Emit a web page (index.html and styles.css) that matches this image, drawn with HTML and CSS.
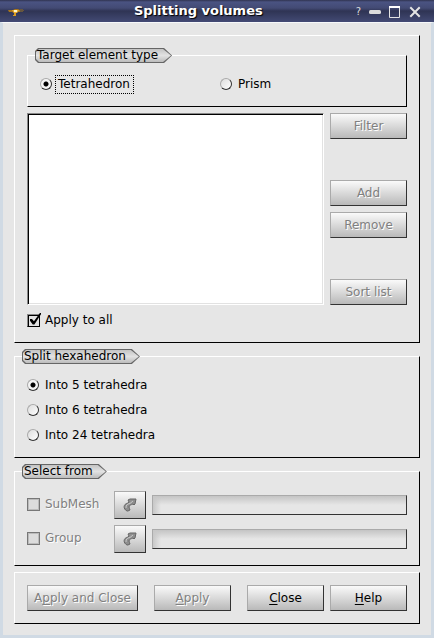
FILE: index.html
```html
<!DOCTYPE html>
<html lang="en">
<head>
<meta charset="utf-8">
<title>Splitting volumes</title>
<link rel="stylesheet" href="styles.css">
</head>
<body>
<header class="titlebar">
  <svg class="app-icon" width="18" height="14" viewBox="0 -1 18 14" aria-hidden="true">
    <path d="M1 5h5l2-1h3l2 1h4l-2 2h-4l-2 1H7L5 7H2z" fill="#a87418"/>
    <path d="M5 5h7l-2 3H7z" fill="#e9ae35"/>
    <path d="M7 5h3v2H7z" fill="#fff6c8"/>
    <path d="M7 8h2v3H6v-1h1z" fill="#d99a20"/>
    <path d="M13 4h3v3h-3z" fill="#66563f"/>
  </svg>
  <h1>Splitting volumes</h1>
  <div class="window-controls">
    <button type="button" class="ctl ctl-help" aria-label="What's this">?</button>
    <button type="button" class="ctl" aria-label="Minimize"><svg width="12" height="12" viewBox="0 0 12 12"><rect y="4" width="12" height="4" rx="1.5" fill="#dcdcdc"/></svg></button>
    <button type="button" class="ctl" aria-label="Maximize"><svg width="12" height="12" viewBox="0 0 12 12"><path d="M.5 1v10.500h10V1" fill="none" stroke="#e4e4e4"/><path d="M0 1h11" stroke="#fff" stroke-width="2"/></svg></button>
    <button type="button" class="ctl" aria-label="Close window"><svg width="12" height="12" viewBox="0 0 12 12"><path d="M2 2l8 8m0-8l-8 8" stroke="#e4e4e4" stroke-width="2" stroke-linecap="square"/></svg></button>
  </div>
</header>
<main class="dialog">
  <section class="group arguments">
    <fieldset class="group">
      <legend>Target element type</legend>
      <div class="two-columns">
        <label class="option"><input type="radio" name="type" checked><span class="focused">Tetrahedron</span></label>
        <label class="option"><input type="radio" name="type"><span>Prism</span></label>
      </div>
    </fieldset>
    <div class="elements">
      <select class="element-list" size="10" aria-label="Elements"></select>
      <div class="list-actions">
        <button type="button" class="btn" disabled>Filter</button>
        <div class="stack">
          <button type="button" class="btn" disabled>Add</button>
          <button type="button" class="btn" disabled>Remove</button>
        </div>
        <button type="button" class="btn" disabled>Sort list</button>
      </div>
    </div>
    <label class="option check"><input type="checkbox" checked><span>Apply to all</span></label>
  </section>

  <fieldset class="group">
    <legend>Split hexahedron</legend>
    <div class="stack">
      <label class="option"><input type="radio" name="split" checked><span>Into 5 tetrahedra</span></label>
      <label class="option"><input type="radio" name="split"><span>Into 6 tetrahedra</span></label>
      <label class="option"><input type="radio" name="split"><span>Into 24 tetrahedra</span></label>
    </div>
  </fieldset>

  <fieldset class="group">
    <legend>Select from</legend>
    <div class="sources">
      <label class="option check disabled"><input type="checkbox" disabled><span>SubMesh</span></label>
      <button type="button" class="btn pick" disabled aria-label="Select submesh">
        <svg width="16" height="16" viewBox="0 0 16 16"><path d="M5 14C1 12 1 7 6 6l1-1-1-2 2-1h6l-1 5-1 1-1-1c-2 1-4 1-4 3 0 1 1 2 1 3l-2 1z" fill="#8e8e8e" stroke="#666"/><path d="M4 11c0-3 1-4 4-4.500l3-2.500" fill="none" stroke="#c8c8c8"/></svg>
      </button>
      <input class="field" type="text" disabled aria-label="SubMesh name">
      <label class="option check disabled"><input type="checkbox" disabled><span>Group</span></label>
      <button type="button" class="btn pick" disabled aria-label="Select group">
        <svg width="16" height="16" viewBox="0 0 16 16"><path d="M5 14C1 12 1 7 6 6l1-1-1-2 2-1h6l-1 5-1 1-1-1c-2 1-4 1-4 3 0 1 1 2 1 3l-2 1z" fill="#8e8e8e" stroke="#666"/><path d="M4 11c0-3 1-4 4-4.500l3-2.500" fill="none" stroke="#c8c8c8"/></svg>
      </button>
      <input class="field" type="text" disabled aria-label="Group name">
    </div>
  </fieldset>

  <footer class="group actions">
    <button type="button" class="btn wide" disabled>A<u>p</u>ply and Close</button>
    <button type="button" class="btn" disabled><u>A</u>pply</button>
    <div class="pair">
      <button type="button" class="btn"><u>C</u>lose</button>
      <button type="button" class="btn"><u>H</u>elp</button>
    </div>
  </footer>
</main>
</body>
</html>
```
FILE: styles.css
```css
* { box-sizing: border-box; }

body {
  margin: 0;
  min-height: 100vh;
  display: flex;
  flex-direction: column;
  background: #e6e6e6;
  color: #000;
  font: 12px/15px "DejaVu Sans", sans-serif;
}

button, input, select { font: inherit; margin: 0; }

.titlebar {
  display: grid;
  grid-template-columns: auto 1fr auto;
  align-items: center;
  height: 22px;
  padding: 0 13px 0 7px;
  background: linear-gradient(#303450, #4a5382 2px, #434a74 8px, #2f3454 11px, #363c60 15px, #434a74);
}
.titlebar h1 {
  margin: 0;
  padding: 0 0 2px 16px;
  color: #fff;
  font-size: 13px;
  font-weight: bold;
  text-align: center;
  text-shadow: 1px 1px 1px #000;
}
.window-controls { display: flex; justify-content: flex-end; align-items: center; gap: 8px; padding-top: 2px; }
.ctl { display: flex; padding: 0; border: 0; background: none; color: #ddd; }
.ctl-help { font-size: 10px; line-height: 12px; }

.dialog {
  flex: 1;
  display: flex;
  flex-direction: column;
  gap: 6px;
  padding: 12px 11px 11px;
  border: solid #d0dae4;
  border-width: 1px 3px 3px;
  border-color: #f6f8fa #d0dae4 #d0dae4;
}

.group {
  min-width: 0;
  margin: 0;
  padding: 12px;
  border: 1px solid;
  border-color: #fff #000 #000 #fff;
}
.arguments { display: flex; flex-direction: column; gap: 6px; }

legend {
  position: relative;
  z-index: 0;
  height: 15px;
  margin-left: -5px;
  padding: 0 14px 0 2px;
}
legend::before, legend::after {
  content: "";
  position: absolute;
  z-index: -1;
  inset: 0;
  background: #666;
  clip-path: polygon(0 3px, 3px 0, calc(100% - 8px) 0, 100% 50%, calc(100% - 8px) 100%, 3px 100%, 0 calc(100% - 3px));
}
legend::after { inset: 1px; background: linear-gradient(#c4c4c4, #e2e2e2 50%, #bcbcbc); }

.two-columns { display: grid; grid-template-columns: 1fr 1fr; gap: 6px; }
.stack { display: flex; flex-direction: column; gap: 6px; }

.option { display: flex; align-items: center; gap: 3px; height: 19px; }
.option span { padding: 2px 3px; }
.option .focused { padding-right: 4px; outline: 1px dotted #000; outline-offset: -1px; }
.check { gap: 2px; }

input[type="radio"], input[type="checkbox"] { appearance: none; flex: none; }
input[type="radio"] {
  width: 12px;
  height: 12px;
  margin-bottom: 1px;
  border: 1px solid;
  border-color: #aaa #333 #333 #aaa;
  border-radius: 50%;
  background: linear-gradient(135deg, #ddd, #fff);
}
input[type="radio"]:checked { background: radial-gradient(circle, #000 2px, #f4f4f4 3px); }
input[type="checkbox"] {
  position: relative;
  width: 13px;
  height: 13px;
  border: 1px solid;
  border-color: #888 #000 #000 #888;
  background: #e2e2e2;
  box-shadow: inset 1px 1px 0 #000;
}
input[type="checkbox"]:checked::after {
  content: "";
  position: absolute;
  left: 2px;
  top: -2px;
  width: 11px;
  height: 12px;
  background: #000;
  clip-path: polygon(0 50%, 18% 50%, 36% 68%, 90% 0, 100% 0, 100% 10%, 40% 95%, 25% 95%, 0 65%);
}
input[type="checkbox"]:disabled { border-color: #777; box-shadow: inset 0 0 0 1px #bbb; background: #dcdcdc; }
.disabled { color: #808080; text-shadow: 1px 1px 0 #fff; }

.elements { display: flex; gap: 6px; height: 192px; }
.element-list {
  flex: 1;
  min-width: 0;
  padding: 0;
  border: 1px solid;
  border-color: #888 #fff #fff #888;
  border-radius: 0;
  outline: 0;
  background: #fff;
  box-shadow: inset 1px 1px 0 #000, inset -1px -1px 0 #e2e2e2;
}
.list-actions { display: flex; flex-direction: column; justify-content: space-between; }

.btn {
  width: 77px;
  height: 26px;
  padding: 1px 0 0;
  border: 1px solid;
  border-color: #aaa #333 #333 #aaa;
  background: linear-gradient(#fafafa, #b9b9b9);
  color: #000;
  line-height: 15px;
}
.btn:disabled { color: #808080; text-shadow: 1px 1px 0 #fff; }
.btn u { text-underline-offset: 2px; text-decoration-thickness: 1px; text-decoration-skip-ink: none; }
.wide { width: 111px; }
.pick { display: grid; place-items: center; width: 32px; height: 28px; padding: 0; }

.sources {
  display: grid;
  grid-template-columns: 81px 32px 1fr;
  gap: 6px;
  align-items: center;
}
.sources .option { height: 20px; padding-bottom: 1px; }
.field {
  width: 100%;
  height: 20px;
  min-width: 0;
  border: 1px solid;
  border-color: #aaa #333 #333 #aaa;
  background: linear-gradient(90deg, #c8c8c8, transparent 8px), linear-gradient(#c4c4c4, #e6e6e6 9px);
}

.actions { display: flex; justify-content: space-between; }
.pair { display: flex; gap: 6px; }
```
